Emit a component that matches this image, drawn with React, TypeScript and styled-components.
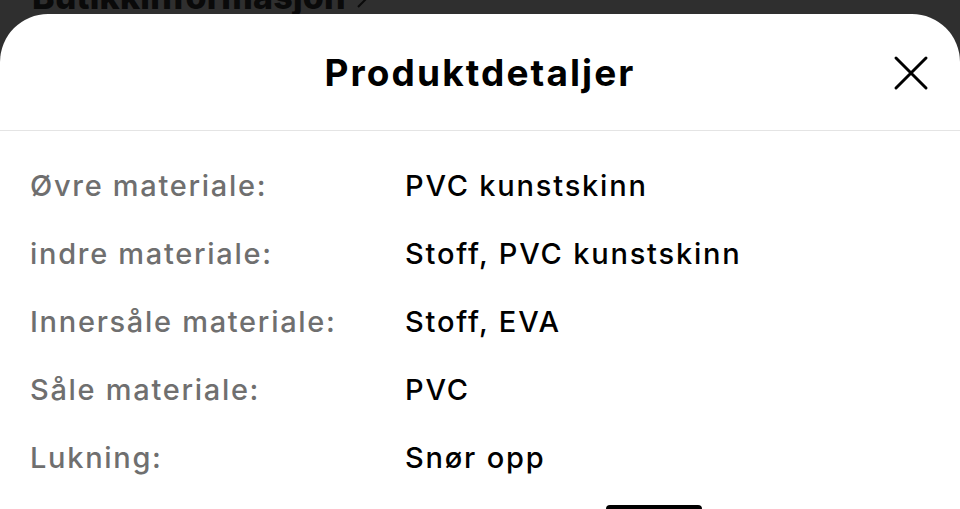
import React from "react";
import styled, { createGlobalStyle } from "styled-components";

const Global = createGlobalStyle`
  html, body { margin: 0; padding: 0; background: #2f2f2f; }
  body { width: 960px; height: 509px; overflow: hidden; font-family: Inter, "Noto Sans", "Liberation Sans", sans-serif; }
`;

const Screen = styled.div`
  position: relative;
  width: 960px;
  height: 509px;
  display: flex;
  flex-direction: column;
  background: #2f2f2f;
  overflow: hidden;
`;

const Backdrop = styled.div`
  height: 14px;
  flex: none;
  overflow: hidden;
  padding-left: 32px;
`;

const BackdropTitle = styled.div`
  font-size: 34px;
  font-weight: 800;
  letter-spacing: 0.2px;
  color: #0a0a0a;
  line-height: 36px;
  margin-top: -21px;
  white-space: nowrap;
  display: flex;
  align-items: center;
  gap: 10px;
`;

const Sheet = styled.div`
  flex: 1;
  background: #ffffff;
  border-radius: 48px 48px 0 0;
  display: flex;
  flex-direction: column;
`;

const Header = styled.header`
  height: 116px;
  flex: none;
  border-bottom: 1px solid #e4e4e4;
  display: flex;
  align-items: center;
  justify-content: center;
  position: relative;
`;

const Title = styled.h1`
  margin: 0;
  font-size: 37px;
  font-weight: 700;
  color: #000;
  letter-spacing: 2.1px;
`;

const CloseButton = styled.button`
  position: absolute;
  right: 30px;
  top: 40px;
  width: 38px;
  height: 38px;
  padding: 0;
  border: 0;
  background: transparent;
  display: flex;
  align-items: center;
  justify-content: center;
`;

const List = styled.dl`
  margin: 0;
  padding: 21px 0 0 30px;
  display: grid;
  grid-template-columns: 375px 1fr;
`;

const Label = styled.dt`
  margin: 0;
  font-size: 29px;
  letter-spacing: 1.7px;
  line-height: 68px;
  color: #6f6f6f;
  font-weight: 500;
`;

const Value = styled.dd`
  margin: 0;
  font-size: 29px;
  letter-spacing: 1.8px;
  line-height: 68px;
  color: #000;
  font-weight: 500;
`;

const HomeIndicator = styled.div`
  position: absolute;
  left: 606px;
  bottom: -4px;
  width: 96px;
  height: 8px;
  border-radius: 4px;
  background: #000;
`;

const rows: [string, string][] = [
  ["Øvre materiale:", "PVC kunstskinn"],
  ["indre materiale:", "Stoff, PVC kunstskinn"],
  ["Innersåle materiale:", "Stoff, EVA"],
  ["Såle materiale:", "PVC"],
  ["Lukning:", "Snør opp"],
];

export default function App() {
  return (
    <>
      <Global />
      <Screen>
        <Backdrop>
          <BackdropTitle>
            Butikkinformasjon
            <svg width="14" height="24" viewBox="0 0 14 24">
              <path d="M2 2 L12 12 L2 22" fill="none" stroke="#0a0a0a" strokeWidth="2" />
            </svg>
          </BackdropTitle>
        </Backdrop>
        <Sheet>
          <Header>
            <Title>Produktdetaljer</Title>
            <CloseButton aria-label="Lukk">
              <svg width="36" height="36" viewBox="0 0 36 36">
                <path d="M3 3 L33 33 M33 3 L3 33" stroke="#000" strokeWidth="3" strokeLinecap="round" fill="none" />
              </svg>
            </CloseButton>
          </Header>
          <List>
            {rows.map(([k, v]) => (
              <React.Fragment key={k}>
                <Label>{k}</Label>
                <Value>{v}</Value>
              </React.Fragment>
            ))}
          </List>
        </Sheet>
        <HomeIndicator />
      </Screen>
    </>
  );
}
